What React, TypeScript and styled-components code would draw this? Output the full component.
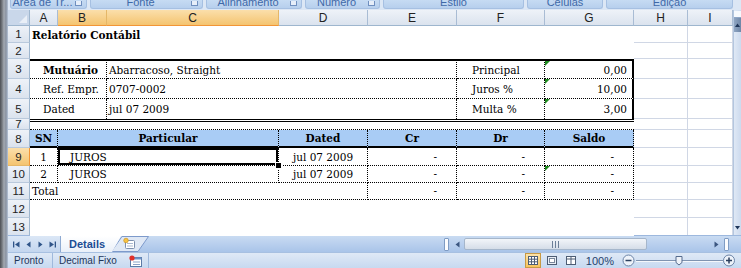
import styled, { createGlobalStyle, css } from "styled-components";

const GlobalStyle = createGlobalStyle`
  html, body { margin: 0; padding: 0; }
  body { background: #fff; font-family: "Liberation Sans", Arial, sans-serif; }
`;

type Line = "dot" | "thick" | "double" | "none";
const line = (l?: Line) =>
  l === "dot" ? "1px dotted #000" : l === "thick" ? "2px solid #000" : l === "double" ? "3px double #000" : "none";

const Window = styled.div`
  display: flex;
  width: 741px;
  height: 268px;
  overflow: hidden;
`;

const Frame = styled.div`
  flex: none;
  width: 8px;
  background: linear-gradient(90deg, #4c4f54 0, #74787e 2px, #a3a9b1 4px, #8891a0 6px, #b6c5d9 8px);
`;

const Body = styled.div`
  flex: 1;
  display: flex;
  flex-direction: column;
  min-width: 0;
`;

/* ribbon group labels, cut at the top */
const RibbonStrip = styled.div`
  flex: none;
  height: 10px;
  display: flex;
  gap: 3px;
  padding-left: 2px;
  background: #dce7f5;
  overflow: hidden;
`;

const GroupLabel = styled.div<{ $w: number; $launcher?: boolean }>`
  position: relative;
  flex: none;
  box-sizing: border-box;
  width: ${p => p.$w}px;
  height: 9px;
  padding-right: ${p => (p.$launcher ? 12 : 0)}px;
  background: linear-gradient(#c6dbf3, #b7cfed);
  border: 1px solid #a6c0e2;
  border-top: none;
  border-radius: 0 0 3px 3px;
  overflow: hidden;
  text-align: center;
  font-size: 11px;
  line-height: 12px;
  color: #3f69a8;
`;

const LabelText = styled.div`
  margin-top: -4px;
  white-space: nowrap;
`;

const Launcher = styled.span`
  position: absolute;
  right: 4px;
  top: 1px;
  width: 5px;
  height: 4px;
  border: 1px solid #6f8fbf;
  border-top: none;
  background: #e6eef9;
`;

/* sheet */
const Main = styled.div`
  flex: 1;
  display: flex;
  min-height: 0;
`;

const Sheet = styled.div`
  flex: none;
  width: 725px;
  display: grid;
  grid-template-columns: 22px 28px 49px 172px 89px 89px 88px 89px 54px 45px;
  grid-template-rows: 16px 17px 16px 20px 20px 20px 11px 18px 18px 17px 17px 18px 18px;
  align-content: start;
  background: #fff;
  font-family: "DejaVu Serif", "Liberation Serif", serif;
  font-size: 10.5px;
  color: #000;
`;

const headBg = (sel?: boolean) =>
  sel ? "linear-gradient(#fbdfab, #f4c470)" : "linear-gradient(#eef2f8, #dbe3ee)";

const Corner = styled.div`
  position: relative;
  background: #c9d7ea;
  border-right: 1px solid #9eb6ce;
  border-bottom: 1px solid #9eb6ce;
  &::after {
    content: "";
    position: absolute;
    right: 2px;
    bottom: 2px;
    border-bottom: 8px solid #e9eff7;
    border-left: 8px solid transparent;
  }
`;

const ColHead = styled.div<{ $sel?: boolean }>`
  display: flex;
  align-items: center;
  justify-content: center;
  background: ${p => headBg(p.$sel)};
  border-right: 1px solid ${p => (p.$sel ? "#e5b768" : "#a9bcd4")};
  border-bottom: 1px solid ${p => (p.$sel ? "#f29536" : "#9eb6ce")};
  font-family: "Liberation Sans", Arial, sans-serif;
  font-size: 12px;
  color: #222;
`;

const RowHead = styled.div<{ $sel?: boolean }>`
  display: flex;
  align-items: center;
  justify-content: center;
  overflow: hidden;
  background: ${p => headBg(p.$sel)};
  border-right: 1px solid ${p => (p.$sel ? "#f29536" : "#9eb6ce")};
  border-bottom: 1px solid ${p => (p.$sel ? "#e5b768" : "#b9c9dc")};
  font-family: "Liberation Sans", Arial, sans-serif;
  font-size: 11.5px;
  color: #222;
`;

const Cell = styled.div<{
  $span?: number;
  $align?: "left" | "center" | "right";
  $bold?: boolean;
  $pl?: number;
  $pr?: number;
  $t?: Line;
  $r?: Line;
  $b?: Line;
  $fill?: string;
  $flag?: boolean;
  $active?: boolean;
}>`
  grid-column: span ${p => p.$span ?? 1};
  position: relative;
  display: flex;
  align-items: center;
  justify-content: ${p => (p.$align === "center" ? "center" : p.$align === "right" ? "flex-end" : "flex-start")};
  box-sizing: border-box;
  padding: 0 ${p => p.$pr ?? 2}px 0 ${p => p.$pl ?? 2}px;
  white-space: nowrap;
  font-weight: ${p => (p.$bold ? 700 : 400)};
  background: ${p => p.$fill ?? "#fff"};
  border-top: ${p => line(p.$t)};
  border-right: ${p => line(p.$r)};
  border-bottom: ${p => line(p.$b)};
  ${p =>
    p.$flag &&
    css`
      &::before {
        content: "";
        position: absolute;
        left: 0;
        top: 0;
        border-top: 5px solid #1f8a1f;
        border-right: 5px solid transparent;
      }
    `}
  ${p =>
    p.$active &&
    css`
      box-shadow: inset 0 0 0 2px #000;
      z-index: 1;
      &::after {
        content: "";
        position: absolute;
        right: -4px;
        bottom: -4px;
        width: 5px;
        height: 5px;
        background: #000;
        border: 1px solid #fff;
      }
    `}
`;

const Grid = styled.div`
  background: #fff;
  border-right: 1px solid #d0d7e5;
  border-bottom: 1px solid #d0d7e5;
`;

const VScroll = styled.div`
  flex: 1;
  display: flex;
  flex-direction: column;
  background: linear-gradient(90deg, #dfe8f5, #ccdaee);
  border-left: 1px solid #b3c6df;
`;

const SplitBox = styled.div`
  height: 6px;
  margin-top: 1px;
  background: #f6f9fd;
  border-bottom: 1px solid #8ea6c6;
`;

const ScrollBtn = styled.div<{ $down?: boolean }>`
  height: 14px;
  margin-top: ${p => (p.$down ? "auto" : "0")};
  display: flex;
  align-items: center;
  justify-content: center;
  background: ${p => (p.$down ? "transparent" : "linear-gradient(90deg, #8fa5c2, #6f87a8)")};
`;

/* sheet tabs + horizontal scroll */
const TabBar = styled.div`
  flex: none;
  height: 16px;
  display: flex;
  background: linear-gradient(#c9dbf2, #a9c4e9);
  border-top: 1px solid #9db8de;
`;

const TabArea = styled.div`
  flex: none;
  width: 436px;
  display: flex;
  align-items: stretch;
`;

const NavGroup = styled.div`
  flex: none;
  width: 53px;
  display: flex;
  align-items: center;
  gap: 5px;
  padding-left: 5px;
  box-sizing: border-box;
  background: linear-gradient(#dbe7f6, #c3d6ef);
  border-right: 1px solid #8eaad2;
`;

const SheetTab = styled.div`
  flex: none;
  display: flex;
  align-items: center;
  padding: 0 16px 1px 8px;
  background: linear-gradient(#ffffff, #eaf0f9);
  clip-path: polygon(0 0, 100% 0, calc(100% - 9px) 100%, 0 100%);
  font-size: 11px;
  font-weight: 700;
  color: #1c4d94;
`;

const NewTab = styled.svg`
  flex: none;
  margin-left: -10px;
`;

const HScroll = styled.div`
  flex: 1;
  display: flex;
  align-items: center;
  padding-right: 9px;
`;

const Grip = styled.div<{ $ml?: number }>`
  flex: none;
  width: 3px;
  height: 11px;
  margin-left: ${p => p.$ml ?? 0}px;
  background: #fbfcfe;
  border: 1px solid #7f9cc4;
  border-radius: 1px;
`;

const Thumb = styled.div`
  flex: none;
  width: 183px;
  height: 12px;
  margin-left: 4px;
  display: flex;
  align-items: center;
  justify-content: center;
  box-sizing: border-box;
  background: linear-gradient(#f2f5f9, #d5dde8);
  border: 1px solid #a5b6cb;
  border-radius: 2px;
`;

const Arrow = styled.svg<{ $ml?: number }>`
  flex: none;
  margin-left: ${p => p.$ml ?? 0}px;
`;

/* status bar */
const StatusBar = styled.div`
  flex: none;
  height: 15px;
  display: flex;
  align-items: center;
  background: linear-gradient(#dfe9f6, #c7d9f0);
  border-top: 1px solid #a7c0e1;
  font-size: 10px;
  color: #1e3559;
  white-space: nowrap;
`;

const StatusItem = styled.div<{ $w: number }>`
  flex: none;
  width: ${p => p.$w}px;
  height: 100%;
  box-sizing: border-box;
  display: flex;
  align-items: center;
  padding-left: 6px;
  border-right: 1px solid #9fb9dc;
`;

const MacroIcon = styled.svg`
  flex: none;
  margin-left: 12px;
`;

const StatusRight = styled.div`
  margin-left: auto;
  display: flex;
  align-items: center;
  padding-right: 5px;
`;

const ViewBtn = styled.div<{ $on?: boolean }>`
  width: 14px;
  height: 13px;
  margin-right: 3px;
  display: flex;
  align-items: center;
  justify-content: center;
  background: ${p => (p.$on ? "linear-gradient(#fde3a8, #f6c45d)" : "transparent")};
  border: 1px solid ${p => (p.$on ? "#c89a45" : "transparent")};
`;

const ZoomText = styled.span`
  margin: 0 8px 0 4px;
  font-size: 11px;
  color: #243f6b;
`;

const groups = [
  { w: 77, t: "Área de Tr...", l: true },
  { w: 113, t: "Fonte", l: true },
  { w: 96, t: "Alinhamento", l: true },
  { w: 75, t: "Número", l: true },
  { w: 141, t: "Estilo" },
  { w: 76, t: "Células" },
  { w: 127, t: "Edição" },
];

const cols = ["A", "B", "C", "D", "E", "F", "G", "H", "I"];

function GridPair() {
  return (
    <>
      <Grid />
      <Grid />
    </>
  );
}

function NavIcon({ kind }: { kind: "first" | "prev" | "next" | "last" }) {
  const c = "#2f5488";
  return (
    <svg width="7" height="7" viewBox="0 0 7 7">
      {kind === "first" && (
        <>
          <rect x="0" y="0.5" width="1.3" height="6" fill={c} />
          <path d="M6.5 0.5 L2 3.5 L6.5 6.5 Z" fill={c} />
        </>
      )}
      {kind === "prev" && <path d="M5.5 0.5 L1.5 3.5 L5.5 6.5 Z" fill={c} />}
      {kind === "next" && <path d="M1.5 0.5 L5.5 3.5 L1.5 6.5 Z" fill={c} />}
      {kind === "last" && (
        <>
          <path d="M0.5 0.5 L5 3.5 L0.5 6.5 Z" fill={c} />
          <rect x="5.7" y="0.5" width="1.3" height="6" fill={c} />
        </>
      )}
    </svg>
  );
}

export default function App() {
  return (
    <>
      <GlobalStyle />
      <Window>
        <Frame />
        <Body>
          <RibbonStrip>
            {groups.map(g => (
              <GroupLabel key={g.t} $w={g.w} $launcher={g.l}>
                <LabelText>{g.t}</LabelText>
                {g.l && <Launcher />}
              </GroupLabel>
            ))}
          </RibbonStrip>

          <Main>
            <Sheet>
              <Corner />
              {cols.map(c => (
                <ColHead key={c} $sel={c === "B" || c === "C"}>
                  {c}
                </ColHead>
              ))}

              <RowHead>1</RowHead>
              <Cell $span={7} $bold>
                Relatório Contábil
              </Cell>
              <GridPair />

              <RowHead>2</RowHead>
              <Cell $span={7} />
              <GridPair />

              <RowHead>3</RowHead>
              <Cell $span={2} $bold $pl={13} $t="thick" $r="dot" $b="dot">
                Mutuário
              </Cell>
              <Cell $span={3} $t="thick" $r="dot" $b="dot">
                Abarracoso, Straight
              </Cell>
              <Cell $pl={15} $t="thick" $r="dot" $b="dot">
                Principal
              </Cell>
              <Cell $align="right" $pr={5} $t="thick" $r="thick" $b="dot" $flag>
                0,00
              </Cell>
              <GridPair />

              <RowHead>4</RowHead>
              <Cell $span={2} $pl={13} $r="dot" $b="dot">
                Ref. Empr.
              </Cell>
              <Cell $span={3} $r="dot" $b="dot">
                0707-0002
              </Cell>
              <Cell $pl={15} $r="dot" $b="dot">
                Juros %
              </Cell>
              <Cell $align="right" $pr={5} $r="thick" $b="dot" $flag>
                10,00
              </Cell>
              <GridPair />

              <RowHead>5</RowHead>
              <Cell $span={2} $pl={13} $r="dot">
                Dated
              </Cell>
              <Cell $span={3} $r="dot">
                jul 07 2009
              </Cell>
              <Cell $pl={15} $r="dot">
                Multa %
              </Cell>
              <Cell $align="right" $pr={5} $r="thick" $flag>
                3,00
              </Cell>
              <GridPair />

              <RowHead>7</RowHead>
              <Cell $span={7} $t="double" $b="dot" />
              <GridPair />

              <RowHead>8</RowHead>
              <Cell $align="center" $bold $fill="#a9ccf5" $r="dot" $b="thick">
                SN
              </Cell>
              <Cell $span={2} $align="center" $bold $fill="#a9ccf5" $r="dot" $b="thick">
                Particular
              </Cell>
              <Cell $align="center" $bold $fill="#a9ccf5" $r="dot" $b="thick">
                Dated
              </Cell>
              <Cell $align="center" $bold $fill="#a9ccf5" $r="dot" $b="thick">
                Cr
              </Cell>
              <Cell $align="center" $bold $fill="#a9ccf5" $r="dot" $b="thick">
                Dr
              </Cell>
              <Cell $align="center" $bold $fill="#a9ccf5" $r="dot" $b="thick">
                Saldo
              </Cell>
              <GridPair />

              <RowHead $sel>9</RowHead>
              <Cell $align="center" $r="dot" $b="dot">
                1
              </Cell>
              <Cell $span={2} $pl={12} $r="dot" $b="dot" $active>
                JUROS
              </Cell>
              <Cell $align="center" $r="dot" $b="dot">
                jul 07 2009
              </Cell>
              <Cell $align="right" $pr={19} $r="dot" $b="dot">
                -
              </Cell>
              <Cell $align="right" $pr={19} $r="dot" $b="dot">
                -
              </Cell>
              <Cell $align="right" $pr={19} $r="dot" $b="dot">
                -
              </Cell>
              <GridPair />

              <RowHead>10</RowHead>
              <Cell $align="center" $r="dot" $b="dot">
                2
              </Cell>
              <Cell $span={2} $pl={12} $r="dot" $b="dot">
                JUROS
              </Cell>
              <Cell $align="center" $r="dot" $b="dot">
                jul 07 2009
              </Cell>
              <Cell $align="right" $pr={19} $r="dot" $b="dot">
                -
              </Cell>
              <Cell $align="right" $pr={19} $r="dot" $b="dot">
                -
              </Cell>
              <Cell $align="right" $pr={19} $r="dot" $b="dot" $flag>
                -
              </Cell>
              <GridPair />

              <RowHead>11</RowHead>
              <Cell $span={4} $r="dot" $b="dot">
                Total
              </Cell>
              <Cell $align="right" $pr={19} $r="dot" $b="dot">
                -
              </Cell>
              <Cell $align="right" $pr={19} $r="dot" $b="dot">
                -
              </Cell>
              <Cell $align="right" $pr={19} $r="dot" $b="dot">
                -
              </Cell>
              <GridPair />

              <RowHead>12</RowHead>
              <Cell $span={7} />
              <GridPair />

              <RowHead>13</RowHead>
              <Cell $span={7} />
              <GridPair />
            </Sheet>

            <VScroll>
              <SplitBox />
              <ScrollBtn>
                <svg width="5" height="4" viewBox="0 0 5 4">
                  <path d="M0 4 L2.5 0.5 L5 4 Z" fill="#1e3559" />
                </svg>
              </ScrollBtn>
              <ScrollBtn $down>
                <svg width="5" height="4" viewBox="0 0 5 4">
                  <path d="M0 0 L2.5 3.5 L5 0 Z" fill="#1e3559" />
                </svg>
              </ScrollBtn>
            </VScroll>
          </Main>

          <TabBar>
            <TabArea>
              <NavGroup>
                <NavIcon kind="first" />
                <NavIcon kind="prev" />
                <NavIcon kind="next" />
                <NavIcon kind="last" />
              </NavGroup>
              <SheetTab>Details</SheetTab>
              <NewTab width="38" height="16" viewBox="0 0 38 16">
                <path d="M0.5 15.5 L11 0.5 L37.5 0.5 L27 15.5 Z" fill="#dfe8f5" stroke="#7d9acb" />
                <rect x="14.5" y="4.5" width="9" height="8" rx="1" fill="#fff" stroke="#7b8fae" />
                <path d="M16 7.5 H22 M16 10 H22" stroke="#a9b8cf" />
                <circle cx="15" cy="4.5" r="2.3" fill="#f6c343" stroke="#c68b16" strokeWidth="0.6" />
              </NewTab>
            </TabArea>
            <HScroll>
              <Grip />
              <Arrow $ml={6} width="5" height="7" viewBox="0 0 5 7">
                <path d="M4.5 0.5 L0.5 3.5 L4.5 6.5 Z" fill="#3b5680" />
              </Arrow>
              <Thumb>
                <svg width="9" height="7" viewBox="0 0 9 7">
                  <path d="M1.5 0 V7 M4.5 0 V7 M7.5 0 V7" stroke="#6c7f98" />
                </svg>
              </Thumb>
              <Arrow $ml={67} width="5" height="7" viewBox="0 0 5 7">
                <path d="M0.5 0.5 L4.5 3.5 L0.5 6.5 Z" fill="#3b5680" />
              </Arrow>
              <Grip $ml={5} />
            </HScroll>
          </TabBar>

          <StatusBar>
            <StatusItem $w={45}>Pronto</StatusItem>
            <StatusItem $w={96}>
              Decimal Fixo
              <MacroIcon width="13" height="12" viewBox="0 0 13 12">
                <rect x="1.5" y="2.5" width="11" height="9" fill="#fff" stroke="#5d7ba6" />
                <rect x="1.5" y="2.5" width="11" height="2" fill="#6e93c8" />
                <path d="M4 7 H11 M4 9.5 H11" stroke="#8aa3c7" />
                <circle cx="3" cy="3" r="2.6" fill="#e0302a" />
              </MacroIcon>
            </StatusItem>
            <StatusRight>
              <ViewBtn $on>
                <svg width="10" height="9" viewBox="0 0 10 9">
                  <rect x="0.5" y="0.5" width="9" height="8" fill="#fff" stroke="#4d5d74" />
                  <path d="M0.5 3.2 H9.5 M0.5 5.8 H9.5 M3.5 0.5 V8.5 M6.5 0.5 V8.5" stroke="#4d5d74" />
                </svg>
              </ViewBtn>
              <ViewBtn>
                <svg width="10" height="9" viewBox="0 0 10 9">
                  <rect x="0.5" y="0.5" width="9" height="8" fill="#e9eef5" stroke="#4d5d74" />
                  <rect x="2.5" y="2.5" width="5" height="4" fill="#fff" stroke="#7a889c" />
                </svg>
              </ViewBtn>
              <ViewBtn>
                <svg width="10" height="9" viewBox="0 0 10 9">
                  <rect x="0.5" y="0.5" width="9" height="8" fill="#fff" stroke="#4d5d74" />
                  <path d="M5 0.5 V8.5 M0.5 3 H9.5" stroke="#4d5d74" />
                </svg>
              </ViewBtn>
              <ZoomText>100%</ZoomText>
              <svg width="114" height="13" viewBox="0 0 114 13">
                <circle cx="6.5" cy="6.5" r="5.5" fill="#eef3fa" stroke="#6b83a6" />
                <path d="M3.5 6.5 H9.5" stroke="#2b3f5e" strokeWidth="1.5" />
                <path d="M14 6.5 H101" stroke="#7f93b0" />
                <path d="M14 7.5 H101" stroke="#f4f7fb" />
                <path d="M54 2.5 H60 V8.5 L57 11 L54 8.5 Z" fill="#eef2f8" stroke="#546b8d" />
                <circle cx="107" cy="6.5" r="5.5" fill="#eef3fa" stroke="#6b83a6" />
                <path d="M104 6.5 H110 M107 3.5 V9.5" stroke="#2b3f5e" strokeWidth="1.5" />
              </svg>
            </StatusRight>
          </StatusBar>
        </Body>
      </Window>
    </>
  );
}
